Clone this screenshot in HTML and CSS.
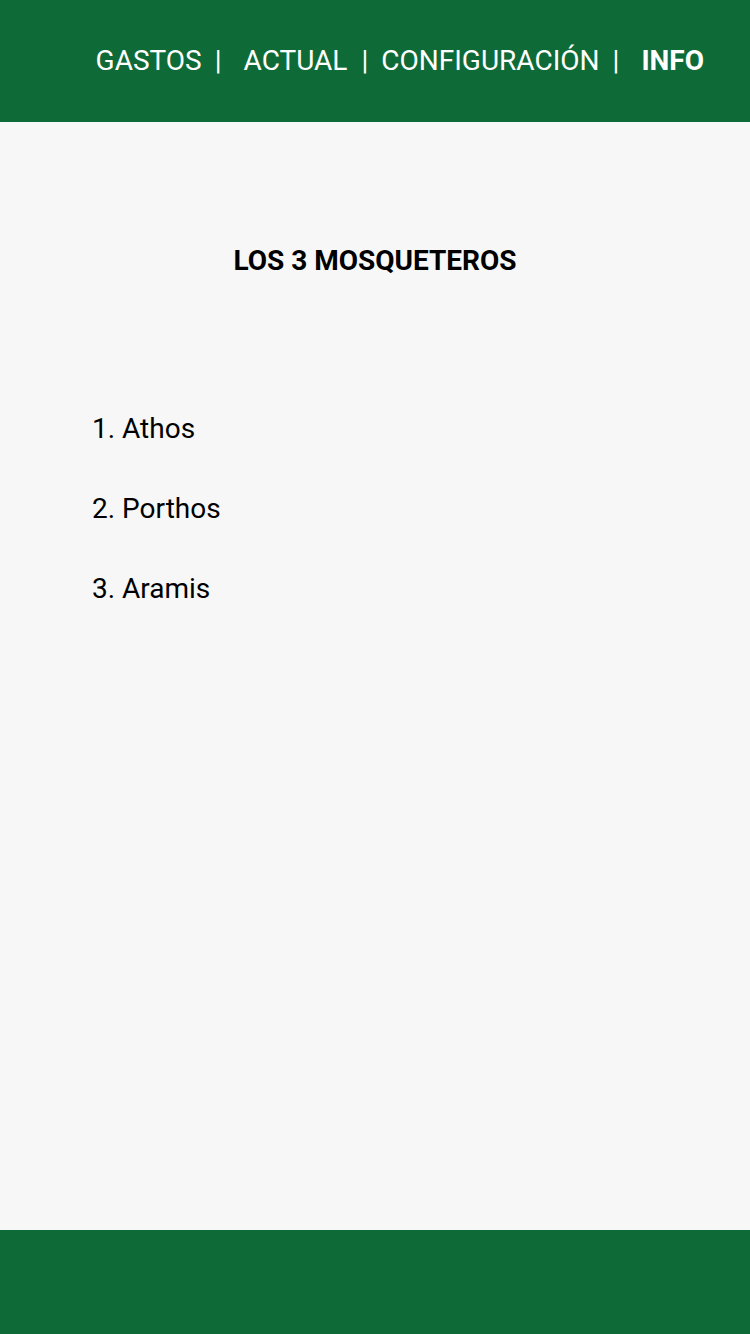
FILE: index.html
```html
<!DOCTYPE html>
<html lang="es">
<head>
<meta charset="utf-8">
<link rel="stylesheet" href="styles.css">
</head>
<body>
<div class="app">
  <header class="topbar">
    <nav class="nav">
      <span class="nav-item">GASTOS</span>
      <span class="sep sep-1">|</span>
      <span class="nav-item">ACTUAL</span>
      <span class="sep sep-2">|</span>
      <span class="nav-item">CONFIGURACIÓN</span>
      <span class="sep sep-3">|</span>
      <span class="nav-item active">INFO</span>
    </nav>
  </header>
  <main class="content">
    <h1 class="title">LOS 3 MOSQUETEROS</h1>
    <ol class="list">
      <li>1. Athos</li>
      <li>2. Porthos</li>
      <li>3. Aramis</li>
    </ol>
  </main>
  <footer class="bottombar"></footer>
</div>
</body>
</html>
```
FILE: styles.css
```css
html, body {
  margin: 0;
  padding: 0;
}
body {
  font-family: Roboto, "Liberation Sans", sans-serif;
  background: #f7f7f7;
}
.app {
  width: 750px;
  height: 1334px;
  display: flex;
  flex-direction: column;
}
.topbar {
  height: 122px;
  background: #0e6b38;
  display: flex;
  align-items: center;
  justify-content: flex-end;
  padding-right: 46px;
  box-sizing: border-box;
}
.nav {
  display: flex;
  align-items: center;
  color: #fff;
  font-size: 28px;
  line-height: 32px;
}
.nav-item.active {
  font-weight: 700;
}
.sep-1 {
  margin: 0 22px 0 13px;
}
.sep-2 {
  margin: 0 13px 0 14px;
}
.sep-3 {
  margin: 0 22px 0 13px;
}
.content {
  flex: 1;
  background: #f7f7f7;
}
.title {
  margin: 122px 0 0 0;
  text-align: center;
  font-size: 28px;
  line-height: 34px;
  font-weight: 700;
  color: #000;
}
.list {
  list-style: none;
  margin: 134px 0 0 92px;
  padding: 0;
  font-size: 28px;
  line-height: 34px;
  color: #000;
  display: flex;
  flex-direction: column;
  gap: 46px;
}
.bottombar {
  height: 104px;
  background: #0e6b38;
}
```
